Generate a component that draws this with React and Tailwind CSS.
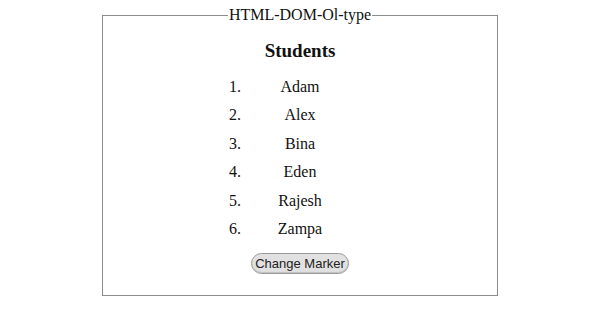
const STUDENTS = ['Adam', 'Alex', 'Bina', 'Eden', 'Rajesh', 'Zampa']

export default function App() {
  return (
    <div className="h-[319px] w-[600px] bg-white pt-[6px] font-['Liberation_Serif',serif] text-[#111]">
      <fieldset className="mx-auto w-[396px] border border-[#8c8c8c] px-0 pb-[21px] pt-0">
        <legend className="mx-auto px-[1px] text-[16px] leading-[18px]">HTML-DOM-Ol-type</legend>
        <h3 className="pt-[16px] text-center text-[19px] font-bold leading-[22px]">Students</h3>
        <ol className="mt-[11px]">
          {STUDENTS.map((name, i) => (
            <li key={name} className="flex justify-center text-[16px] leading-[28.4px]">
              <span className="w-[32px] text-right">{i + 1}.</span>
              <span className="w-[118px] text-center">{name}</span>
              <span className="w-[32px]" />
            </li>
          ))}
        </ol>
        <div className="mt-[10px] flex justify-center">
          <button
            type="button"
            className="h-[21px] rounded-full border border-[#9a9a9a] bg-[#e1e1e1] px-[3px] font-['Liberation_Sans',Arial,sans-serif] text-[13px] leading-none text-[#222] shadow-[inset_0_-1px_1px_rgba(0,0,0,0.15)]"
          >
            Change Marker
          </button>
        </div>
      </fieldset>
    </div>
  )
}
